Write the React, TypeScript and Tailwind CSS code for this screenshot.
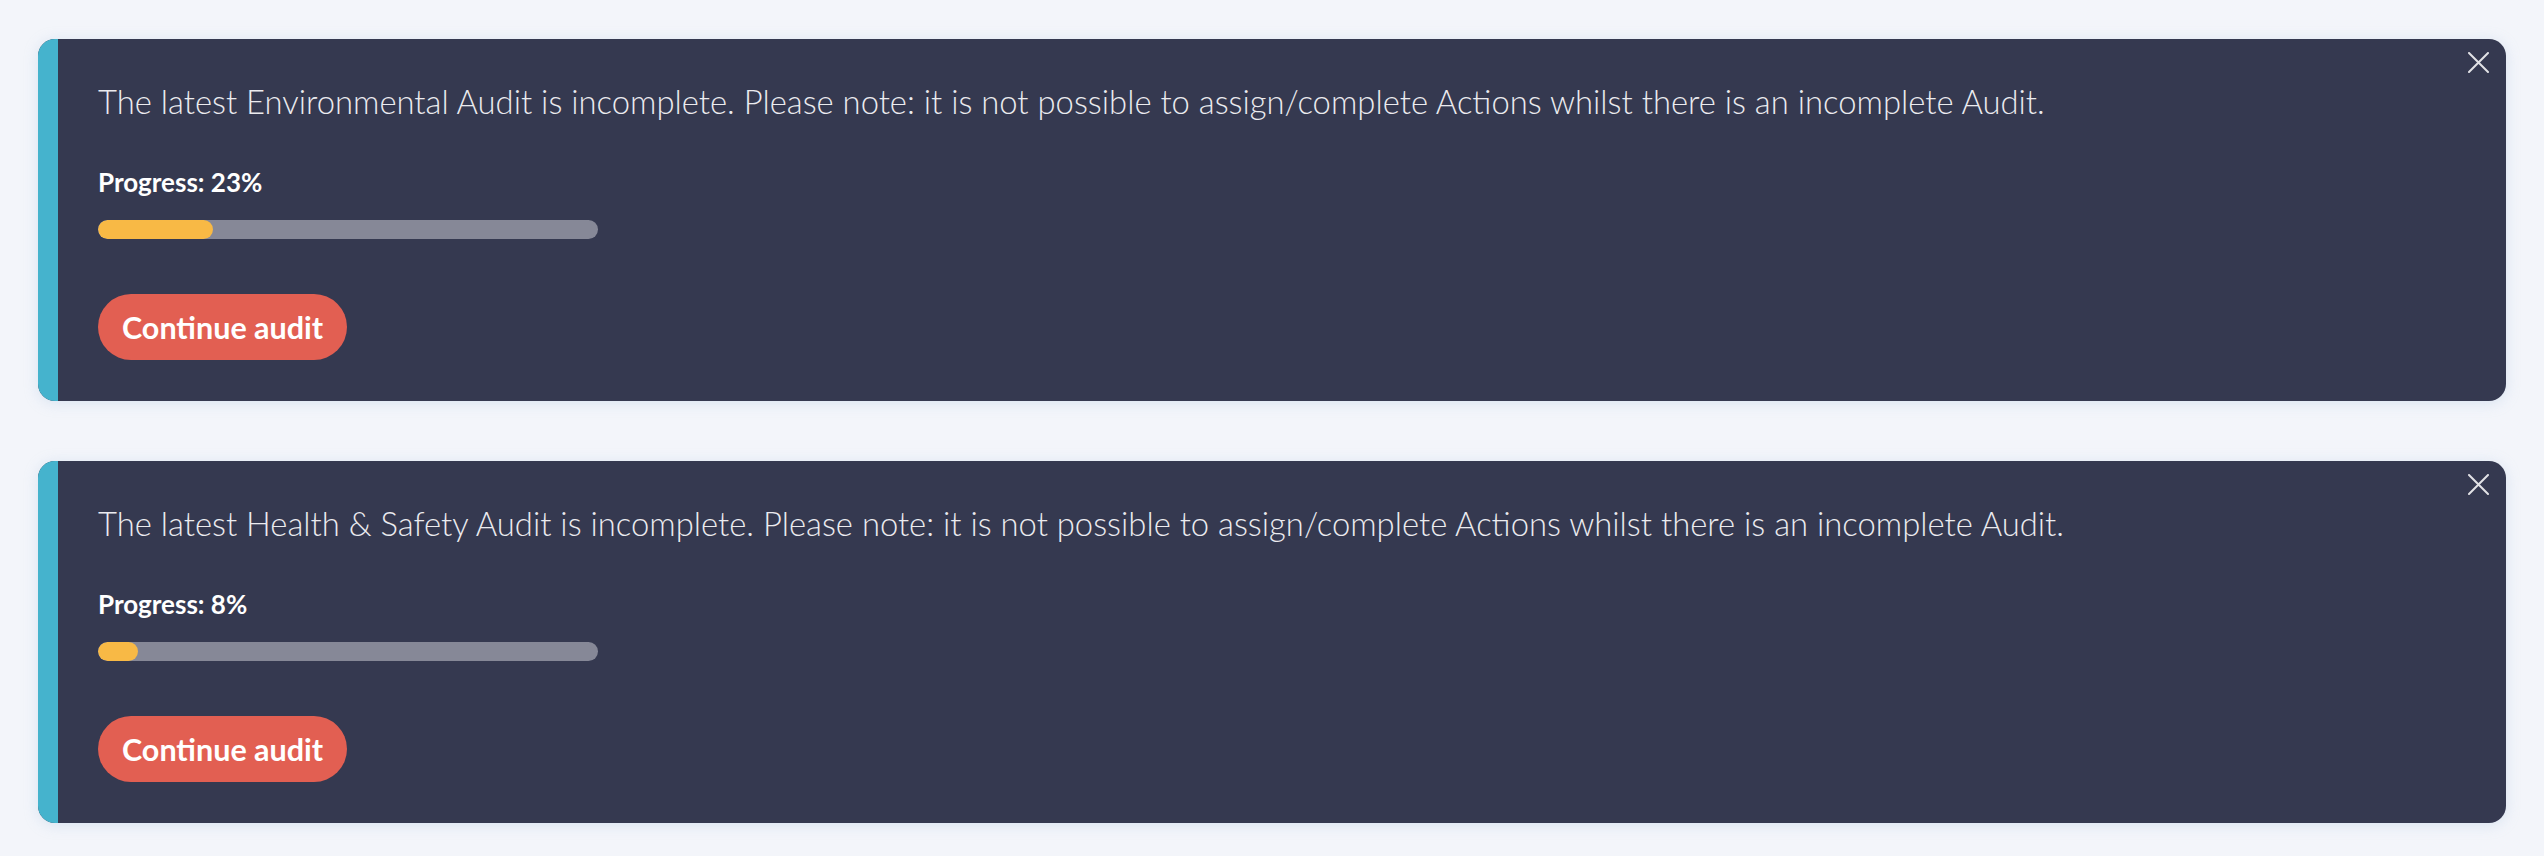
import React from "react";

type Audit = {
  name: string;
  progress: number;
};

const audits: Audit[] = [
  { name: "Environmental", progress: 23 },
  { name: "Health & Safety", progress: 8 },
];

const CloseIcon = () => (
  <svg width="21" height="21" viewBox="0 0 21 21" fill="none">
    <path d="M1 1L20 20M20 1L1 20" stroke="#e2e2e6" strokeWidth="2" strokeLinecap="round" />
  </svg>
);

const AuditBanner = ({ audit }: { audit: Audit }) => {
  return (
    <div className="relative flex rounded-[17px] overflow-hidden bg-[#353950] shadow-[0_2px_14px_rgba(170,195,225,0.35)]">
      <div className="w-[20px] shrink-0 bg-[#45b3cd]" />
      <div className="flex-1 flex flex-col items-start pl-[40px] pr-[60px] pt-[43px] pb-[41px]">
        <p className="text-[32.8px] leading-[40px] font-light text-[#ebebef]">
          The latest {audit.name} Audit is incomplete. Please note: it is not possible to assign/complete Actions whilst there is an incomplete Audit.
        </p>
        <div className="mt-[44px] text-[26px] leading-[32px] font-bold text-white">
          Progress: {audit.progress}%
        </div>
        <div className="mt-[22px] w-[500px] h-[19px] rounded-full bg-[#868897] overflow-hidden">
          <div className="h-full rounded-full bg-[#f8b945]" style={{ width: `${audit.progress}%` }} />
        </div>
        <button className="mt-[55px] h-[66px] px-[24px] rounded-full bg-[#e25f52] text-white text-[30.5px] font-bold leading-none">
          Continue audit
        </button>
      </div>
      <button className="absolute top-[13px] right-[17px]">
        <CloseIcon />
      </button>
    </div>
  );
};

export default function App() {
  return (
    <div className="min-h-screen bg-[#f3f5fa] p-[38px] pt-[39px] flex flex-col gap-[60px] font-['Lato','Liberation_Sans',sans-serif]">
      {audits.map((a) => (
        <AuditBanner key={a.name} audit={a} />
      ))}
    </div>
  );
}
